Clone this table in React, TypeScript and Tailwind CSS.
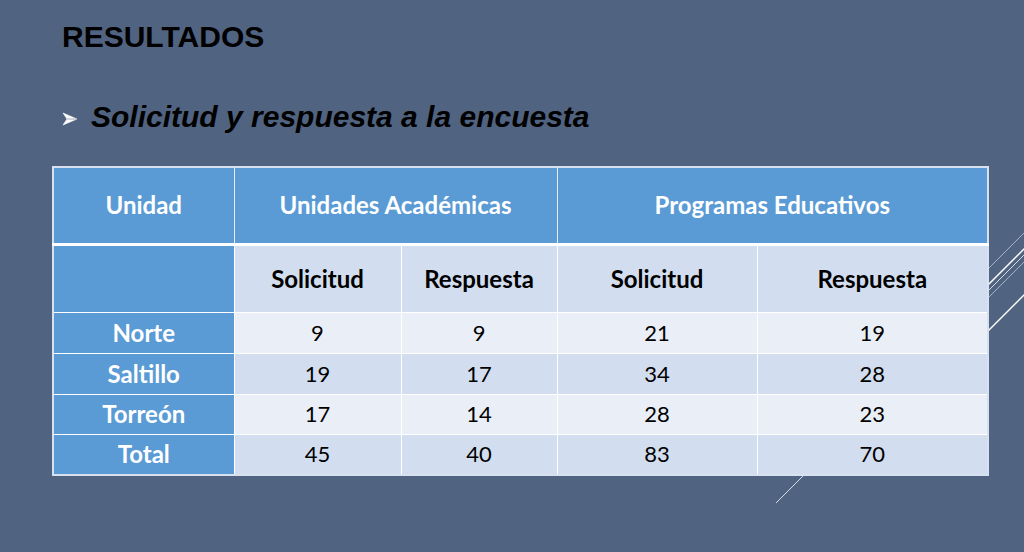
export default function App() {
  const rows = [
    { name: 'Norte', v: ['9', '9', '21', '19'], bg: 'bg-[#e9eef7]' },
    { name: 'Saltillo', v: ['19', '17', '34', '28'], bg: 'bg-[#d2deef]' },
    { name: 'Torreón', v: ['17', '14', '28', '23'], bg: 'bg-[#e9eef7]' },
    { name: 'Total', v: ['45', '40', '83', '70'], bg: 'bg-[#d2deef]' },
  ];
  const heights = ['h-[41px]', 'h-[41px]', 'h-[40px]', 'h-[41px]'];

  return (
    <div className="relative w-[1024px] h-[552px] overflow-hidden bg-[#506381]">
      {/* decorative lines */}
      <svg className="absolute inset-0" width="1024" height="552">
        <line x1="1040" y1="217" x2="900" y2="357" stroke="#c9d3e3" strokeWidth="1" opacity="0.7" />
        <line x1="1040" y1="233" x2="900" y2="373" stroke="#ffffff" strokeWidth="1.5" />
        <line x1="1040" y1="239" x2="776" y2="503" stroke="#d5dcea" strokeWidth="1" />
        <line x1="1040" y1="246" x2="900" y2="386" stroke="#c9d3e3" strokeWidth="1" opacity="0.7" />
        <line x1="1040" y1="279" x2="900" y2="419" stroke="#ffffff" strokeWidth="1.5" />
      </svg>

      <div className="relative pl-[62px] pt-[19px] font-['Liberation_Sans',Arial,sans-serif]">
        <h1 className="text-[30px] font-bold leading-[36px] text-black">RESULTADOS</h1>
        <div className="mt-[45px] flex items-center">
          <svg width="16" height="16" viewBox="0 0 16 16" className="mr-[13px] mt-[3px]">
            <path d="M1 2 L15 8 L1 14 L5 8 Z" fill="#ffffff" stroke="#ffffff" strokeWidth="0.6" strokeLinejoin="round" />
            <path d="M5 8 L15 8" stroke="#8a97ab" strokeWidth="0.8" />
          </svg>
          <span className="text-[30px] font-bold italic leading-[34px] text-black">
            Solicitud y respuesta a la encuesta
          </span>
        </div>
      </div>

      <div className="relative ml-[52px] mt-[32px] w-[936px] font-['Lato','Open_Sans',sans-serif] text-[22px]">
        <table className="w-[935px] border-collapse border-2 border-[#d8e1f0] table-fixed">
          <colgroup>
            <col className="w-[181px]" />
            <col className="w-[167px]" />
            <col className="w-[156px]" />
            <col className="w-[200px]" />
            <col className="w-[231px]" />
          </colgroup>
          <tbody>
            <tr className="h-[77px] bg-[#5b9bd5] text-white font-bold text-[24px] border-b-[3px] border-white">
              <td className="text-center">Unidad</td>
              <td colSpan={2} className="text-center border-l border-[#e6edf7]">Unidades Académicas</td>
              <td colSpan={2} className="text-center border-l border-[#e6edf7]">Programas Educativos</td>
            </tr>
            <tr className="h-[68px] font-bold text-black text-[24px]">
              <td className="bg-[#5b9bd5]"></td>
              <td className="text-center bg-[#d2deef] border-l border-white">Solicitud</td>
              <td className="text-center bg-[#d2deef] border-l border-white">Respuesta</td>
              <td className="text-center bg-[#d2deef] border-l border-white">Solicitud</td>
              <td className="text-center bg-[#d2deef] border-l border-white">Respuesta</td>
            </tr>
            {rows.map((r, i) => (
              <tr key={r.name} className={`${heights[i]} border-t border-white`}>
                <td className="bg-[#5b9bd5] text-center text-white font-bold text-[24px] leading-none">{r.name}</td>
                {r.v.map((v, j) => (
                  <td key={j} className={`${r.bg} text-center text-black border-l border-white leading-none`}>
                    {v}
                  </td>
                ))}
              </tr>
            ))}
          </tbody>
        </table>
      </div>
    </div>
  );
}
